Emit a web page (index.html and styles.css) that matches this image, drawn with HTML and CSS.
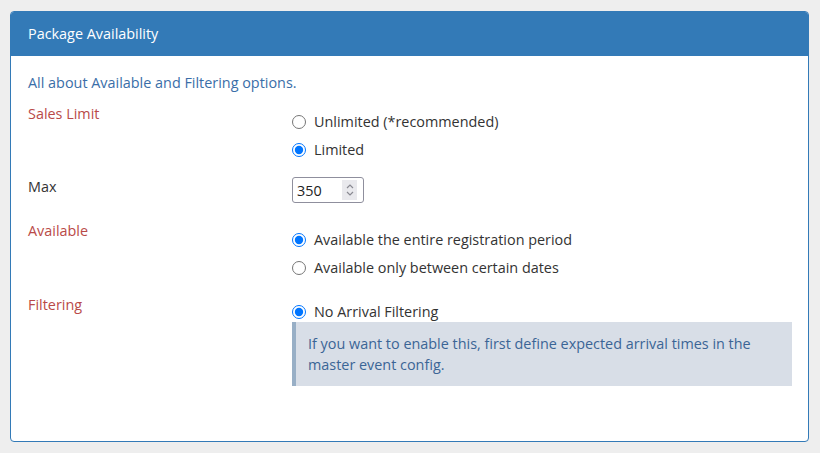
FILE: index.html
```html
<!DOCTYPE html>
<html lang="en">
<head>
    <meta charset="UTF-8">
    <meta name="viewport" content="width=device-width, initial-scale=1.0">
    <title>Package Availability</title>
    <link rel="stylesheet" href="styles.css">
</head>
<body>
    <div class="panel">
        <div class="panel-heading">Package Availability</div>
        <div class="panel-body">
            <p class="intro">All about Available and Filtering options.</p>

            <div class="form-row">
                <label class="row-label required">Sales Limit</label>
                <div class="controls radios">
                    <label class="radio"><input type="radio" name="salesLimit"> Unlimited (*recommended)</label>
                    <label class="radio"><input type="radio" name="salesLimit" checked> Limited</label>
                </div>
            </div>

            <div class="form-row max-row">
                <label class="row-label" for="max">Max</label>
                <div class="controls">
                    <div class="number-wrap">
                        <input type="number" id="max" class="number" value="350">
                        <span class="spin">
                            <svg width="10" height="16" viewBox="0 0 10 16"><path d="M2 6 L5 3 L8 6 M2 10 L5 13 L8 10" fill="none" stroke="#8a8a92" stroke-width="1.2"/></svg>
                        </span>
                    </div>
                </div>
            </div>

            <div class="form-row available-row">
                <label class="row-label required">Available</label>
                <div class="controls radios">
                    <label class="radio"><input type="radio" name="available" checked> Available the entire registration period</label>
                    <label class="radio"><input type="radio" name="available"> Available only between certain dates</label>
                </div>
            </div>

            <div class="form-row">
                <label class="row-label required">Filtering</label>
                <div class="controls radios tight">
                    <label class="radio"><input type="radio" name="filtering" checked> No Arrival Filtering</label>
                    <div class="note">If you want to enable this, first define expected arrival times in the master event config.</div>
                </div>
            </div>
        </div>
    </div>
</body>
</html>
```

FILE: styles.css
```css
body {
    font-family: "Open Sans", Arial, sans-serif;
    font-size: 14.4px;
    line-height: 20px;
    margin: 0;
    padding: 11px 10px;
    background-color: #eeeeee;
    color: #333;
}

.panel {
    width: 797px;
    border: 1px solid #337ab7;
    border-radius: 4px;
    background: #fff;
}

.panel-heading {
    background: #337ab7;
    color: #fff;
    height: 44px;
    line-height: 44px;
    padding: 0 17px;
    border-radius: 3px 3px 0 0;
}

.panel-body {
    padding: 17px 16px 55px 17px;
}

.intro {
    margin: 0 0 11px;
    color: #3a6ea8;
}

.form-row {
    display: flex;
    margin-bottom: 16px;
}

.form-row.max-row {
    margin-bottom: 18px;
}

.form-row.available-row {
    margin-bottom: 17px;
}

.form-row:last-child {
    margin-bottom: 0;
}

.row-label {
    width: 264px;
    flex: none;
}

.max-row .row-label {
    padding-top: 1px;
}

.required {
    color: #b94a48;
}

.controls {
    flex: 1;
}

.radios {
    padding-top: 8px;
    display: flex;
    flex-direction: column;
    gap: 8px;
}

.available-row .radios {
    padding-top: 9px;
}

.radios.tight {
    padding-top: 7px;
    gap: 0;
}

.radio {
    display: flex;
    align-items: center;
    gap: 8px;
}

.radio input {
    margin: 0;
    width: 14px;
    height: 14px;
}

.number-wrap {
    position: relative;
    width: 72px;
    margin-top: 1px;
}

.number {
    width: 72px;
    height: 26px;
    box-sizing: border-box;
    padding: 0 4px;
    font-family: "Open Sans", Arial, sans-serif;
    font-size: 14.4px;
    color: #222;
    border: 1px solid #8f8f9d;
    border-radius: 3px;
}

.spin {
    position: absolute;
    top: 3px;
    right: 7px;
    width: 15px;
    height: 20px;
    background: #e9e9ed;
    display: flex;
    align-items: center;
    justify-content: center;
}

.note {
    background: #d8dee7;
    border-left: 4px solid #98afc6;
    color: #3b6596;
    padding: 11px 12px;
    line-height: 21px;
}
```
